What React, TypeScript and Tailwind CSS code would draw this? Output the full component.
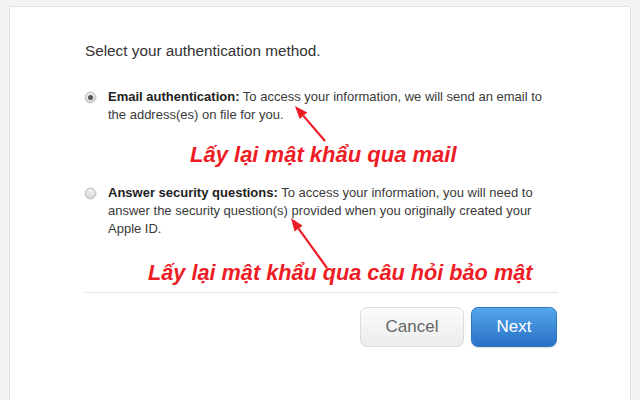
import React from 'react';

const bodyFont = { fontFamily: '"Liberation Sans", Arial, sans-serif' };

function Radio({ checked }: { checked?: boolean }) {
  return (
    <span className="mt-[4px] flex h-[11px] w-[11px] shrink-0 items-center justify-center rounded-full border border-[#b8b8b8] bg-gradient-to-b from-[#f4f4f4] to-[#d6d6d6] shadow-[0_0_0_1px_#ececec]">
      {checked && <span className="h-[5px] w-[5px] rounded-full bg-[#555]" />}
    </span>
  );
}

function Option({
  checked,
  label,
  lines,
}: {
  checked?: boolean;
  label: string;
  lines: string[];
}) {
  return (
    <div className="flex gap-[12px]">
      <Radio checked={checked} />
      <p className="whitespace-nowrap text-[13px] leading-[18px] text-[#3a3a3a]">
        <b className="font-bold text-[#222]">{label}</b> {lines[0]}
        {lines.slice(1).map((l) => (
          <React.Fragment key={l}>
            <br />
            {l}
          </React.Fragment>
        ))}
      </p>
    </div>
  );
}

function Arrow({ x1, y1, x2, y2 }: { x1: number; y1: number; x2: number; y2: number }) {
  const a = Math.atan2(y2 - y1, x2 - x1);
  const len = 13;
  const w = 5;
  const bx = x2 - len * Math.cos(a);
  const by = y2 - len * Math.sin(a);
  const px = -Math.sin(a) * w;
  const py = Math.cos(a) * w;
  return (
    <g>
      <line x1={x1} y1={y1} x2={bx} y2={by} stroke="#ee1c25" strokeWidth={2.2} />
      <polygon
        points={`${x2},${y2} ${bx + px},${by + py} ${bx - px},${by - py}`}
        fill="#ee1c25"
      />
    </g>
  );
}

export default function App() {
  return (
    <div className="relative h-[400px] w-[640px] overflow-hidden bg-[#f3f3f3]" style={bodyFont}>
      <div className="ml-[9px] mt-[6px] h-[420px] w-[622px] rounded-tr-[3px] border border-[#e2e2e2] bg-white pl-[75px] pt-[35px]">
        <h1 className="text-[15.3px] leading-[18px] text-[#333]">Select your authentication method.</h1>

        <div className="mt-[28px]">
          <Option
            checked
            label="Email authentication:"
            lines={[
              'To access your information, we will send an email to',
              'the address(es) on file for you.',
            ]}
          />
        </div>

        <div className="mt-[60px]">
          <Option
            label="Answer security questions:"
            lines={[
              'To access your information, you will need to',
              'answer the security question(s) provided when you originally created your',
              'Apple ID.',
            ]}
          />
        </div>

        <div className="mt-[54px] h-px w-[473px] bg-[#e3e3e3]" />

        <div className="mt-[14px] flex w-[472px] justify-end gap-[7px]">
          <button className="h-[40px] w-[104px] rounded-[7px] border border-[#dcdcdc] bg-gradient-to-b from-[#fbfbfb] to-[#ececec] text-[17px] text-[#666]">
            Cancel
          </button>
          <button className="h-[40px] w-[86px] rounded-[7px] border border-[#2f76c4] bg-gradient-to-b from-[#55a6ea] to-[#2a70c6] text-[17px] text-white shadow-[0_1px_1px_rgba(0,0,0,0.15)]">
            Next
          </button>
        </div>
      </div>

      <p className="absolute left-[190px] top-[142px] whitespace-nowrap text-[22px] font-bold italic leading-[26px] text-[#ee1c25]">
        Lấy lại mật khẩu qua mail
      </p>
      <p className="absolute left-[148px] top-[260px] whitespace-nowrap text-[21.7px] font-bold italic leading-[26px] text-[#ee1c25]">
        Lấy lại mật khẩu qua câu hỏi bảo mật
      </p>

      <svg className="pointer-events-none absolute left-0 top-0" width={640} height={400}>
        <Arrow x1={325} y1={141} x2={295} y2={106} />
        <Arrow x1={327} y1={268} x2={291} y2={218} />
      </svg>
    </div>
  );
}
